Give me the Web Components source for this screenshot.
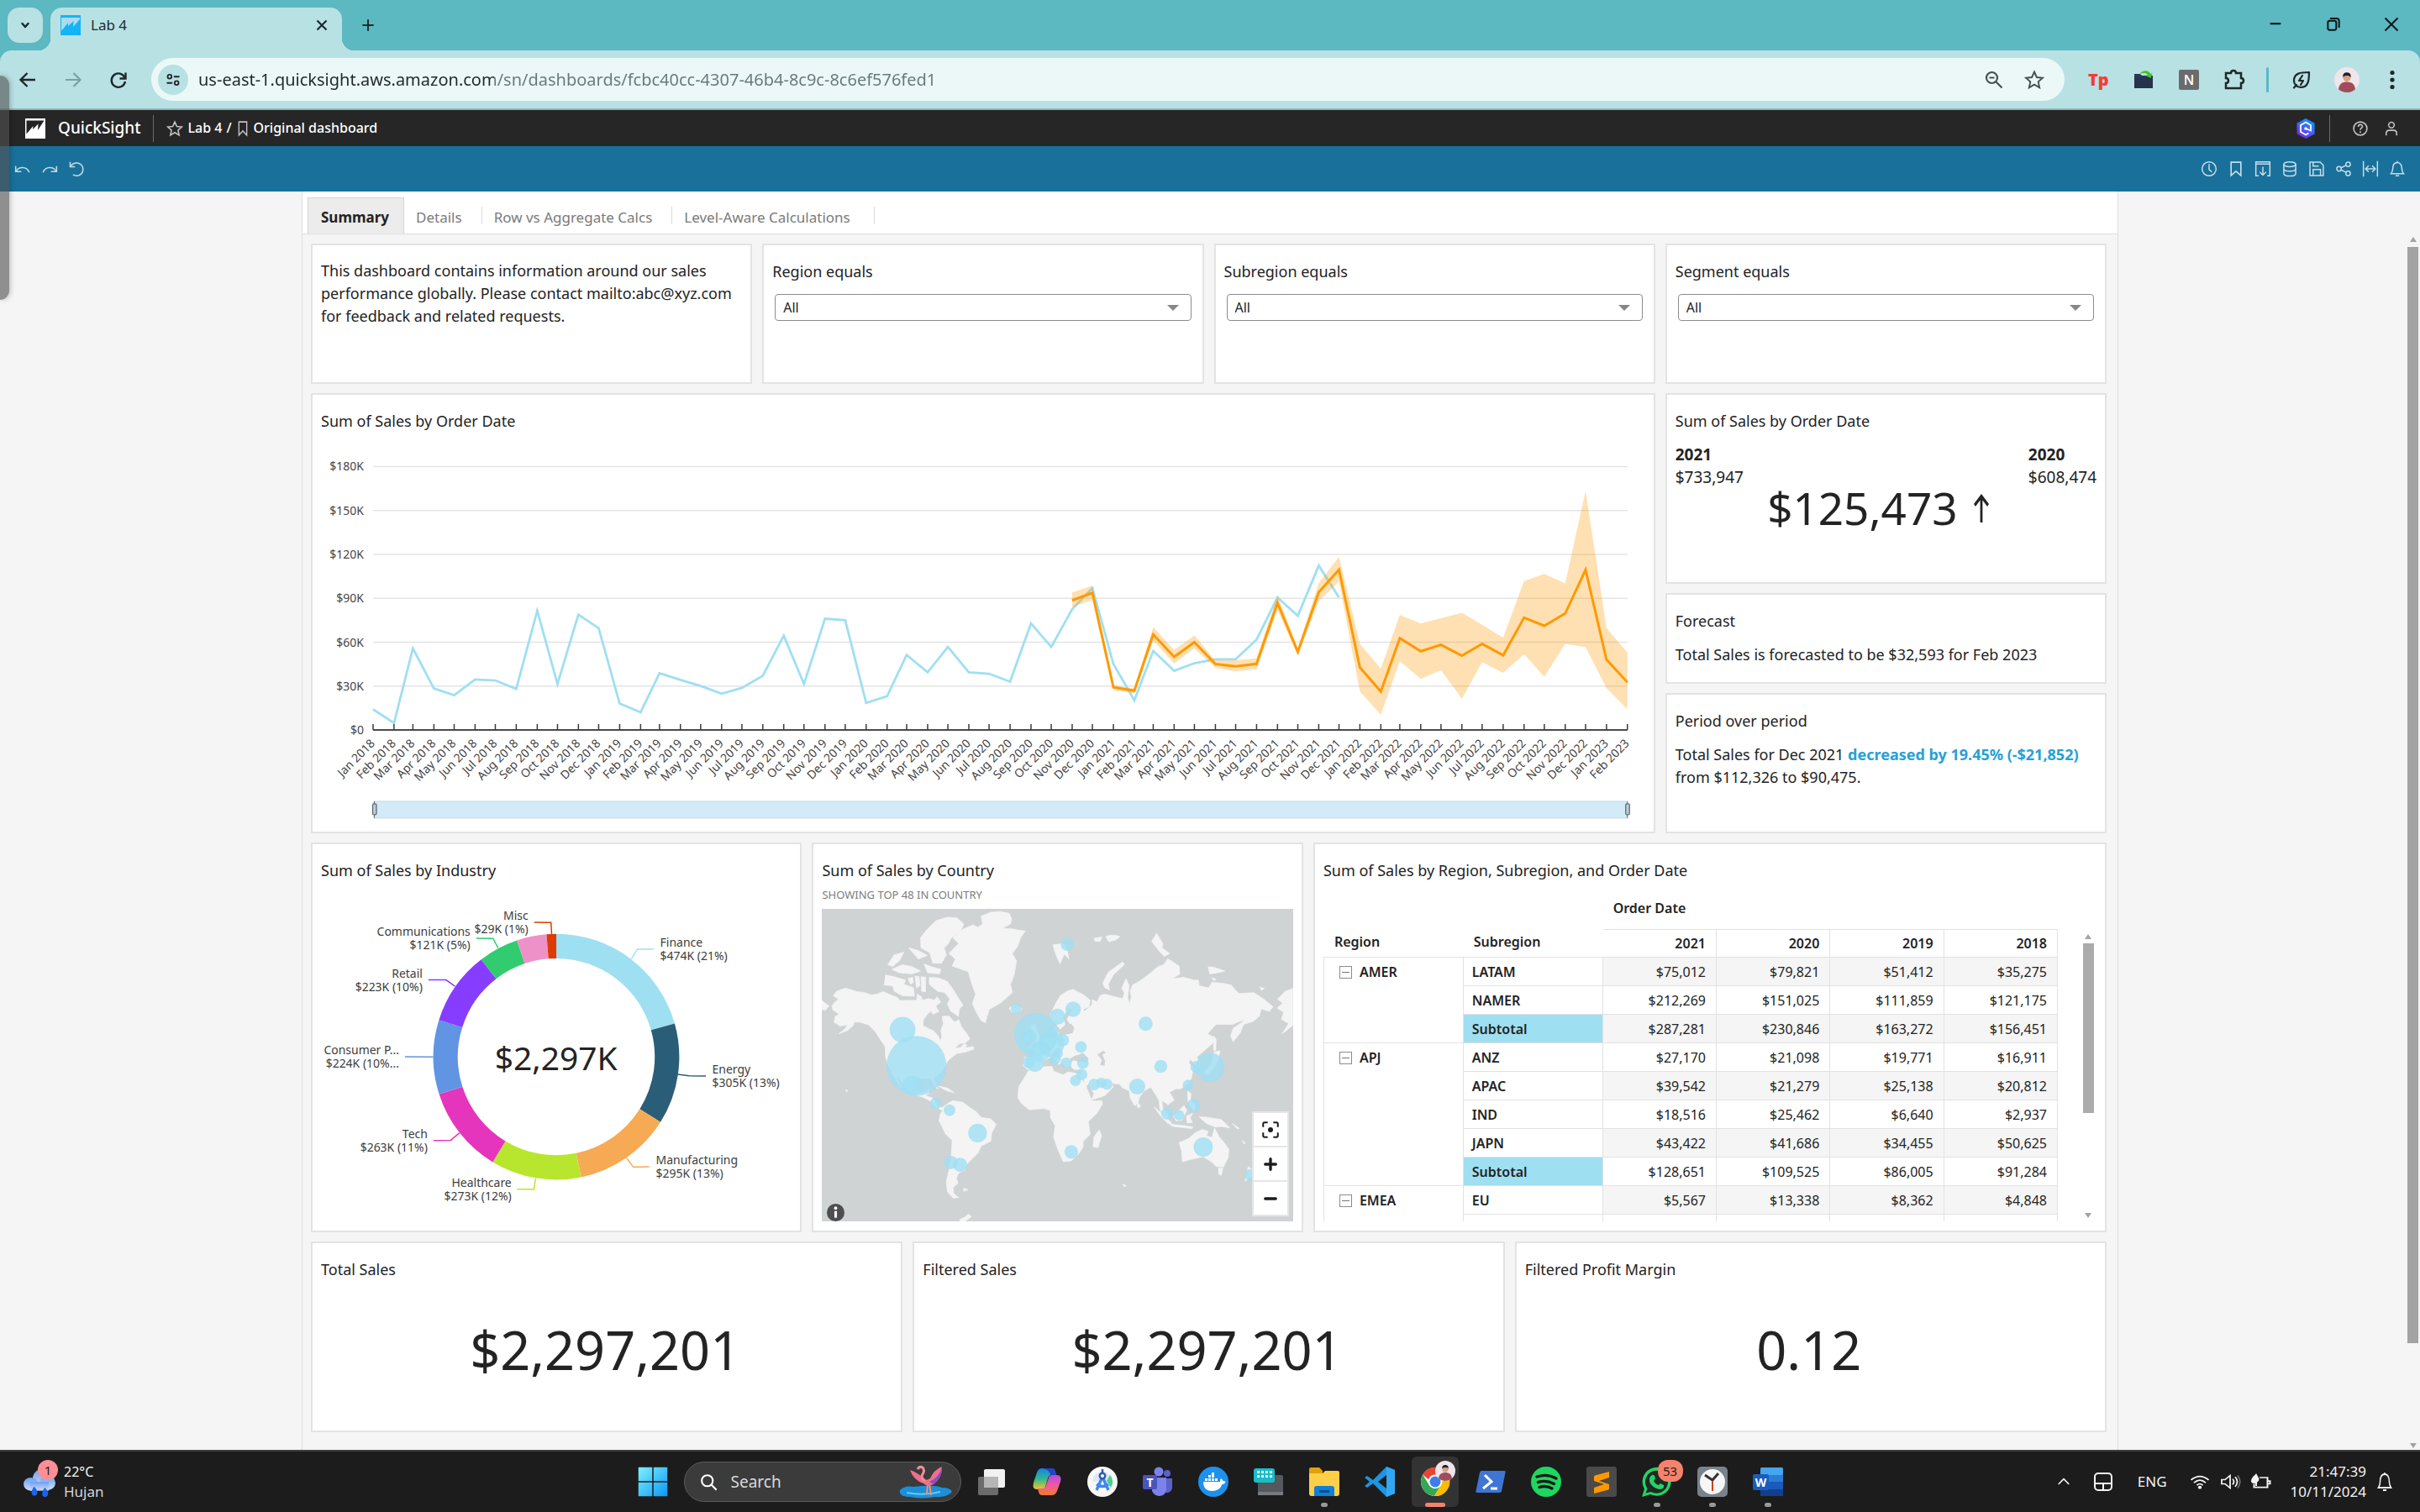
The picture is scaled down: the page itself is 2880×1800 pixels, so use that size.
<!DOCTYPE html>
<html lang="en">
<head>
<meta charset="utf-8">
<title>Lab 4</title>
<style>
html,body{margin:0;height:100%}
body{display:flex;flex-direction:column;background:#f5f5f5;color:#232323;font:18px/27px "Noto Sans","Open Sans",sans-serif;overflow:hidden}
p{margin:0}
sheet-view{flex:1;min-height:0}
</style>
</head>
<body>
<tab-strip></tab-strip>
<browser-toolbar></browser-toolbar>
<quick-header></quick-header>
<action-bar></action-bar>
<sheet-view>
  <dash-row kind="quarters">
    <visual-card><p>This dashboard contains information around our sales performance globally. Please contact mailto:abc@xyz.com for feedback and related requests.</p></visual-card>
    <visual-card><filter-control label="Region equals"></filter-control></visual-card>
    <visual-card><filter-control label="Subregion equals"></filter-control></visual-card>
    <visual-card><filter-control label="Segment equals"></filter-control></visual-card>
  </dash-row>
  <dash-row kind="trend">
    <visual-card heading="Sum of Sales by Order Date"><trend-chart></trend-chart></visual-card>
    <dash-row kind="stack">
      <visual-card heading="Sum of Sales by Order Date"><kpi-compare></kpi-compare></visual-card>
      <visual-card heading="Forecast"><text-insight>Total Sales is forecasted to be $32,593 for Feb 2023</text-insight></visual-card>
      <visual-card heading="Period over period"><text-insight>Total Sales for Dec 2021 <b>decreased by 19.45% (-$21,852)</b> from $112,326 to $90,475.</text-insight></visual-card>
    </dash-row>
  </dash-row>
  <dash-row kind="detail">
    <visual-card heading="Sum of Sales by Industry"><donut-chart></donut-chart></visual-card>
    <visual-card heading="Sum of Sales by Country"><bubble-map></bubble-map></visual-card>
    <visual-card heading="Sum of Sales by Region, Subregion, and Order Date"><pivot-table></pivot-table></visual-card>
  </dash-row>
  <dash-row kind="thirds">
    <visual-card heading="Total Sales"><kpi-value>$2,297,201</kpi-value></visual-card>
    <visual-card heading="Filtered Sales"><kpi-value>$2,297,201</kpi-value></visual-card>
    <visual-card heading="Filtered Profit Margin"><kpi-value>0.12</kpi-value></visual-card>
  </dash-row>
</sheet-view>
<win-taskbar></win-taskbar>

<script>
const BASE = `
*{box-sizing:border-box}
button{font:inherit;color:inherit;background:none;border:0;padding:0;margin:0;display:flex;align-items:center;justify-content:center}
a{color:inherit;text-decoration:none}
p,h1,h2,h3{margin:0;font:inherit}
svg{display:block}
`;
function define(name, css, html, setup) {
  customElements.define(name, class extends HTMLElement {
    constructor() { super(); this.attachShadow({ mode: 'open' }); }
    connectedCallback() {
      this.shadowRoot.innerHTML = `<style>${BASE}${css}</style>` + (typeof html === 'function' ? html(this) : html);
      if (setup) setup(this.shadowRoot, this);
    }
  });
}

/* ---------- icons ---------- */
const line = (d, w = 2) => `<g fill="none" stroke="currentColor" stroke-width="${w}" stroke-linecap="round" stroke-linejoin="round">${d}</g>`;
const flat = (d, w = 2) => `<g fill="none" stroke="currentColor" stroke-width="${w}">${d}</g>`;
const person = `<circle cx="12" cy="12" r="12" fill="#efe6ea"/><path d="M4 21c.5-5 3.5-7 8-7s7.500 2 8 7a12 12 0 0 1-16 0z" fill="#a14c5a"/><circle cx="12" cy="10" r="3.600" fill="#d9a184"/><path d="M8.200 9.500C8 6 10 5 12 5s4 1 3.800 4.500C14.500 7.600 10 7.600 8.200 9.500z" fill="#20222a"/>`;
const ICONS = {
  chevron: line('<path d="M8.500 10l3.500 4 3.500-4"/>', 2.5),
  up: line('<path d="M5 15l7-7 7 7"/>', 2),
  close: flat('<path d="M6.500 6.500l11 11M17.500 6.500l-11 11"/>', 2.2),
  plus: flat('<path d="M12 4v16M4 12h16"/>', 2.3),
  min: flat('<path d="M4.500 11h15"/>', 2.6),
  max: line('<rect x="4" y="7" width="12" height="13" rx="2.500"/><path d="M8 3.500h8.500q3.500 0 3.500 3.500v9"/>', 2.4),
  winclose: flat('<path d="M3 3l18 18M21 3L3 21"/>', 2.3),
  back: flat('<path d="M21 12H4M11.500 4L3.500 12l8 8"/>', 2.4),
  fwd: flat('<path d="M3 12h17M12.500 4l8 8-8 8"/>', 2.2),
  reload: flat('<path d="M19.500 9.500A8.200 8.200 0 1 0 20 14"/><path d="M20.500 3.500v7h-7"/>', 2.4),
  tune: flat('<circle cx="7" cy="7.500" r="2.800"/><path d="M13 7.500h8M3 16.500h8"/><circle cx="17" cy="16.500" r="2.800"/>', 2.2),
  zoomout: flat('<circle cx="9.500" cy="9.500" r="6.500"/><path d="M14.500 14.500l7 7M6.500 9.500h6"/>', 2.2),
  star: flat('<path d="M12 2.500l2.900 6.500 7.100.7-5.300 4.700 1.500 7L12 17.700 5.800 21.400l1.500-7L2 9.700 9.100 9z"/>', 1.9),
  tp: '<text x="0" y="19" font-family="Open Sans,sans-serif" font-weight="800" font-size="20" fill="#f83a35">Tp</text>',
  folder: '<path d="M1 5h7l2 2h13v15H1z" fill="#2a3a55"/><path d="M1 9h22v13H1z" fill="#26334b"/><path d="M7 5.500C11-.5 18 0 20.500 5l2-1-2 6-6-3 2.500-1C15 3.500 11 3.500 7 5.500z" fill="#3fc71e"/>',
  n: '<rect width="24" height="24" rx="2" fill="#6b6b6b"/><text x="12" y="18" text-anchor="middle" font-family="Open Sans,sans-serif" font-weight="600" font-size="16" fill="#fff">N</text>',
  puzzle: flat('<path d="M2 4h6c0-4 6-4 6 0h6v6c4 0 4 6 0 6v6H2v-6c4 0 4-6 0-6z"/>', 2.5),
  leaf: line('<path d="M21 3c-10 0-18 1-18 10 0 4 3 8 8 8 9 0 10-8 10-18zM6 18l-3 3.500"/><path d="M13 7l-4 6h5l-3 5"/>', 2.2),
  avatar: person,
  dots: '<g fill="currentColor"><circle cx="12" cy="3.500" r="2.600"/><circle cx="12" cy="12" r="2.600"/><circle cx="12" cy="20.500" r="2.600"/></g>',
  favicon: '<defs><linearGradient id="g" x2="1" y2="1"><stop stop-color="#7fd7f7"/><stop offset="1" stop-color="#00aef2"/></linearGradient></defs><rect width="24" height="24" fill="#14b4f5"/><path d="M1 3h22v2l-8 9 .5-7L9 13V9L1 19z" fill="#a9dcf0"/>',
  qs: '<path d="M1 0h23v24H0V0z" fill="#fff"/><path d="M1.500 2.500h21L15 14l.5-7.500L9 13l.5-4-8 9.500z" fill="#222"/>',
  book: flat('<path d="M5 2.500h14v19l-7-6-7 6z"/>', 2),
  q: '<defs><linearGradient id="g" x1=".8" y1="0" x2=".2" y2="1"><stop stop-color="#00a0ff"/><stop offset=".55" stop-color="#4a5cff"/><stop offset="1" stop-color="#7a1fd6"/></linearGradient></defs><path d="M12 0l10.500 5.500v13L12 24 1.500 18.500v-13z" fill="url(#g)"/><path d="M15.500 17.500L12 19.500l-6-3.500V8l6-3.500L18 8v6.500l-6-2.500" fill="none" stroke="#fff" stroke-width="1.800"/><circle cx="12" cy="12" r="1.800" fill="#fff"/>',
  help: flat('<circle cx="12" cy="12" r="9.500"/><path d="M9 9.500c0-4 6-4 6-.5 0 2.500-3 2.300-3 5M12 16v2.200"/>', 1.9),
  user: flat('<circle cx="12" cy="7" r="4"/><path d="M4.500 22v-3q0-4.500 4.500-4.500h6q4.500 0 4.500 4.500v3"/>', 1.9),
  undo: flat('<path d="M2 8v8h8"/><path d="M2.500 15.500C6 9 17 7 21.500 17"/>', 1.8),
  redo: flat('<path d="M22 8v8h-8"/><path d="M21.500 15.500C18 9 7 7 2.500 17"/>', 1.8),
  reset: flat('<path d="M3 2v7h7"/><path d="M3.500 8.500C7 3 14 1.800 18.500 6c5 5 3 13-3 15.300-3 1-6 .5-8.500-1"/>', 1.8),
  clock: flat('<circle cx="12" cy="12" r="10"/><path d="M12 5v8l4 3.500"/>', 1.8),
  export: flat('<path d="M6 22H2V2h20v20h-4M2 5h20M12 9v12M7.500 16.500L12 21l4.500-4.500"/>', 1.8),
  db: flat('<ellipse cx="12" cy="5.500" rx="8.500" ry="3.500"/><path d="M3.500 5.500v13c0 5 17 5 17 0v-13M3.500 12c0 4.500 17 4.500 17 0"/>', 1.8),
  save: flat('<path d="M2.500 2.500H17l4.500 4.500v14.500h-19zM7 21v-8h10.500v8M7 2.500V8h8"/>', 1.8),
  share: flat('<circle cx="5.500" cy="12" r="3.200"/><circle cx="18.500" cy="5.500" r="3.200"/><circle cx="18.500" cy="18.500" r="3.200"/><path d="M8.500 10.500l7-3.500M8.500 13.500l7 3.500"/>', 1.8),
  fit: flat('<path d="M2 1v22M22 1v22M5 12h14M9.500 7.500L5 12l4.500 4.500M14.500 7.500L19 12l-4.500 4.500"/>', 1.8),
  bell: flat('<path d="M3 19h18q-2.500-3-2.500-7c0-5-2-9-6.500-9s-6.500 4-6.500 9q0 4-2.500 7zM12 3V1M9.500 22h5"/>', 1.8),
  arrow: flat('<path d="M12 1.500V24M4 9.500L12 2l8 7.500"/>', 2.8),
  centre: flat('<path d="M1.500 8V3.500q0-2 2-2H8M16 1.500h4.500q2 0 2 2V8M22.500 16v4.500q0 2-2 2H16M8 22.500H3.500q-2 0-2-2V16"/>', 2.4) + '<circle cx="12" cy="12" r="3.600" fill="currentColor"/>',
  mplus: line('<path d="M12 4.500v15M4.500 12h15"/>', 4),
  mminus: line('<path d="M4.500 12h15"/>', 4),
  info: '<circle cx="12" cy="12" r="12" fill="#4c4e50"/><circle cx="12" cy="6" r="2.200" fill="#fff"/><path d="M10.200 10h3.600v9h-3.600z" fill="#fff"/>',
  weather: '<defs><linearGradient id="g" x2="0" y2="1"><stop stop-color="#6da0ee"/><stop offset="1" stop-color="#c9dcfb"/></linearGradient></defs><g fill="url(#g)"><circle cx="15" cy="9" r="8"/><circle cx="5.500" cy="14" r="5.500"/><circle cx="18" cy="13" r="6"/><rect x="5" y="12" width="14" height="7.500"/></g><path d="M8 16q5 6 0 8-4-2 0-8zM16 17q5 6 0 8-4-2 0-8z" fill="#1d62f0"/>',
  windows: '<defs><linearGradient id="g" x2="1" y2="1"><stop stop-color="#7ff0ff"/><stop offset="1" stop-color="#0a98f5"/></linearGradient></defs><path d="M.5.500h11v11H.5zM12.500.500h11v11h-11zM.5 12.500h11v11H.5zM12.500 12.500h11v11h-11z" fill="url(#g)"/>',
  magnify: flat('<circle cx="10" cy="10" r="7.500"/><path d="M15.500 15.500l7 7"/>', 2.4),
  pad: flat('<rect x="2" y="2" width="20" height="20" rx="4"/><path d="M2 14h20M12 14v8"/>', 2),
  wifi: flat('<path d="M1.500 9.500Q12-1 22.500 9.500M5 13.500q7-7.500 14 0M8.500 17q3.500-4 7 0"/>', 2) + '<circle cx="12" cy="20" r="2.200" fill="currentColor"/>',
  volume: flat('<path d="M2 9h4l6-6v18l-6-6H2zM15 8q3 4 0 8M18 5q5 7 0 14"/>', 1.8) + '<path d="M21 3q5.500 9 0 18" fill="none" stroke="#6d6d6d" stroke-width="1.800"/>',
  battery: flat('<path d="M11 6h9.500v14H4.500v-5M21 11h2.500v4H21"/>', 2) + '<path d="M1 12C1 5 5 4 7 0c2 5 6 9 1 13v5H6v-4q-4 1-5-2z" fill="currentColor"/>'
};
define('ui-icon', ':host{display:block;width:24px;height:24px;flex:none}svg{width:100%;height:100%;overflow:visible}',
  el => `<svg viewBox="0 0 24 24" preserveAspectRatio="none" aria-hidden="true">${ICONS[el.getAttribute('name')]}</svg>`);

const APPS = {
  taskview: '<rect x="2" y="12" width="24" height="22" rx="2" fill="#6b6b6b"/><rect x="9" y="3" width="25" height="22" rx="2" fill="#f1f1f1"/><path d="M9 12h17v13H11q-2 0-2-2z" fill="#b6b6b6"/>',
  copilot: '<defs><linearGradient id="a" x2="0" y2="1"><stop stop-color="#1a7fe8"/><stop offset=".5" stop-color="#2fb98e"/><stop offset="1" stop-color="#f6c22b"/></linearGradient><linearGradient id="b" x2="0" y2="1"><stop stop-color="#b14be0"/><stop offset=".5" stop-color="#ee5aa0"/><stop offset="1" stop-color="#f5792a"/></linearGradient></defs><path d="M12 2h12q3 0 4 4l1 4h-6q-3 0-4 4l-3 10q-1 3-4 3H6q-6 0-4-8L6 7q2-5 6-5z" fill="url(#a)"/><path d="M24 34H12q-3 0-4-4l-1-4h6q3 0 4-4l3-9q1-3 4-3h6q6 0 4 8l-4 11q-2 5-6 5z" fill="url(#b)"/><path d="M12 2h12q3 0 4 4l1 4h-7q-1-7-10-8z" fill="#2344c4"/>',
  android: '<circle cx="18" cy="18" r="18" fill="#f8f8f8"/><path d="M6 18a12 12 0 0 1 24 0c0 4-2 8-5 10L18 17z" fill="#dfe8fb"/><path d="M27 10a12 12 0 0 1 1 15l-5-8z" fill="#4ad08d"/><path d="M18 12L11 28M18 12l7 16M11 21q7 5 14 0" fill="none" stroke="#4285f4" stroke-width="3.400"/><circle cx="18" cy="11" r="4.500" fill="#2f5fa8"/><circle cx="18" cy="11" r="2" fill="#f8f8f8"/><path d="M18 3v5" stroke="#2f5fa8" stroke-width="2.500"/>',
  teams: '<circle cx="29" cy="8" r="4" fill="#5a62c9"/><circle cx="19" cy="6" r="5.500" fill="#7b83eb"/><path d="M23 14h12v12q-2 6-8 5z" fill="#5a62c9"/><path d="M11 13h17v14q-1 8-9 8-6-1-8-6z" fill="#7b83eb"/><rect x="0" y="10" width="17" height="17" rx="2" fill="#4b53bc"/><text x="8.500" y="24" text-anchor="middle" font-size="14" font-weight="700" fill="#fff">T</text>',
  docker: '<circle cx="18" cy="18" r="18" fill="#1d91ee"/><path d="M6 18h20q0-3 1-4 2 1 2.500 3 2 0 3 1-1 3-4 3-3 8-12 8Q6 29 6 18z" fill="#fff"/><path d="M8 14h3v3H8zM12 14h3v3h-3zM16 14h3v3h-3zM20 14h3v3h-3zM12 10h3v3h-3zM16 10h3v3h-3zM16 7h3v3h-3z" fill="#fff"/>',
  keyboard: '<rect x="5" y="10" width="30" height="24" rx="2" fill="#55585d"/><rect x="5" y="30" width="30" height="4" fill="#777b80"/><rect x="0" y="2" width="25" height="17" rx="3" fill="#18bdc9"/><path d="M4 5h3v3H4zM9 5h3v3H9zM14 5h3v3h-3zM19 5h3v3h-3zM4 10h3v3H4zM9 10h3v3H9zM14 10h3v3h-3zM19 10h3v3h-3z" fill="#eafcff"/>',
  explorer: '<path d="M0 3q0-2 2-2h10l4 4v6H0z" fill="#e3a008"/><path d="M0 8h16l3-3h15q2 0 2 2v25q0 3-3 3H3q-3 0-3-3z" fill="#ffcf48"/><path d="M6 35V26q0-3 3-3h18q3 0 3 3v9z" fill="#0f7fd7"/><path d="M12 28h12v3H12z" fill="#0a4f94"/>',
  vscode: '<path d="M26 0l10 4v28l-10 4L10 20l-7 5-3-2 6-5-6-5 3-2 7 5zM26 10l-10 8 10 8z" fill="#1f94e0"/><path d="M26 0l10 4v28l-10 4z" fill="#33a8f2"/>',
  chrome: '<circle cx="18" cy="18" r="17" fill="#fff"/><path d="M3.300 9.500A17 17 0 0 1 33 9.500H18a8.500 8.500 0 0 0-8 6z" fill="#ea4335"/><path d="M3.300 9.500A17 17 0 0 0 17 35l7.500-12.500a8.500 8.500 0 0 1-14-1z" fill="#34a853"/><path d="M33 9.500A17 17 0 0 1 17 35l8-13a8.500 8.500 0 0 0-1-10.500L18 9.500z" fill="#fbbc04"/><circle cx="18" cy="18" r="8" fill="#fff"/><circle cx="18" cy="18" r="6.500" fill="#3b7ded"/>',
  powershell: '<path d="M7 5h27q2 0 1.500 2L31 29q-.5 2-2.500 2H2q-2 0-1.500-2L5 7q.5-2 2-2z" fill="#3f76d6"/><path d="M11 10l8 8-10 8M18 26h8" fill="none" stroke="#fff" stroke-width="3"/>',
  spotify: '<circle cx="18" cy="18" r="18" fill="#1ed760"/><path d="M7 12q12-4 23 2M8.500 18.500q10-3 19 2M10 24.500q8-2.500 15 1.500" fill="none" stroke="#16181a" stroke-width="3.400" stroke-linecap="round"/>',
  sublime: '<rect width="36" height="36" rx="3" fill="#4a4a4a"/><path d="M27 6v7l-12 4 12 4v5q0 1-1 1.500L9 32v-7l12-4-12-4v-5q0-1 1-1.500z" fill="#ff9800"/>',
  whatsapp: '<path d="M0 36l3-9.500A17 17 0 1 1 10 33z" fill="#25d366"/><path d="M4.500 31.500l2-5.500A13.500 13.500 0 1 1 11 30z" fill="#1f2a24"/><path d="M12 10q2-1 3 1l1 3-2 3q2 4 6 5l2-2 4 2q1 4-4 5-7 0-12-7-3-7 2-10z" fill="#25d366"/>',
  clockapp: '<rect width="36" height="36" rx="5" fill="#79838c"/><circle cx="18" cy="18" r="15" fill="#f6f6f6"/><path d="M9 10l9 6 7-8" fill="none" stroke="#333" stroke-width="3"/><path d="M18 17v12" stroke="#d33d1c" stroke-width="2"/>',
  word: '<rect x="9" y="1" width="27" height="34" rx="2" fill="#2b7cd3"/><rect x="9" y="1" width="27" height="9" rx="2" fill="#43a6ee"/><rect x="9" y="26" width="27" height="9" rx="2" fill="#123f8c"/><rect x="9" y="18" width="27" height="9" fill="#185abd"/><rect x="0" y="9" width="19" height="19" rx="2" fill="#1a5cbe"/><text x="9.500" y="24" text-anchor="middle" font-size="14" font-weight="700" fill="#fff">W</text>'
};
define('app-icon', ':host{display:block;width:36px;height:36px}svg{width:100%;height:100%;overflow:visible}',
  el => `<svg viewBox="0 0 36 36" aria-hidden="true">${APPS[el.getAttribute('name')]}</svg>`);

/* ---------- browser chrome ---------- */
define('tab-strip', `
:host{display:flex;height:60px;background:#5cb8c1;color:#1b2b2d;align-items:flex-end;padding-left:9px;font-size:17px;line-height:24px}
.list{width:42px;height:42px;border-radius:14px;background:#b8e1e4;align-self:center}
.tab{position:relative;display:flex;align-items:center;width:347px;height:51px;margin-left:9px;padding:0 12px;background:#b8e1e4;border-radius:14px 14px 0 0;padding-bottom:9px}
.tab::before,.tab::after{content:"";position:absolute;bottom:0;width:14px;height:14px}
.tab::before{right:100%;background:radial-gradient(circle at 0 0,transparent 14px,#b8e1e4 14px)}
.tab::after{left:100%;background:radial-gradient(circle at 100% 0,transparent 14px,#b8e1e4 14px)}
.tab span{flex:1;margin-left:12px}
.add{width:62px;height:60px}
.win{display:flex;margin-left:auto;height:60px;color:#0b1517}
.win button{width:69px;height:58px}
.win ui-icon{width:20px;height:20px}`,
`<button class="list" aria-label="Search tabs"><ui-icon name="chevron"></ui-icon></button>
<div class="tab"><ui-icon name="favicon"></ui-icon><span>Lab 4</span><button aria-label="Close tab"><ui-icon name="close"></ui-icon></button></div>
<button class="add" aria-label="New tab"><ui-icon name="plus" style="width:20px;height:20px"></ui-icon></button>
<div class="win"><button aria-label="Minimize"><ui-icon name="min"></ui-icon></button><button aria-label="Restore"><ui-icon name="max"></ui-icon></button><button aria-label="Close"><ui-icon name="winclose"></ui-icon></button></div>`);

define('browser-toolbar', `
:host{display:block;background:#5cb8c1;border-bottom:2px solid #8fb6b9}
.bar{display:flex;align-items:center;height:69px;padding:0 6px;background:#b8e1e4;border-radius:14px 14px 0 0;color:#1f2729}
button{width:54px;height:54px}
.off{color:#7d9fa2}
.pill{flex:1;display:flex;align-items:center;height:51px;margin:0 13px 0 12px;padding:0 12px 0 8px;border-radius:26px;background:#ecf8f8;color:#454f51}
.site{width:36px;height:36px;border-radius:50%;background:#b8e1e4;color:#1f2729}
.site ui-icon{width:20px;height:20px}
input{flex:1;min-width:0;margin-left:12px;padding:0;border:0;outline:0;font:20px/28px "Noto Sans","Open Sans",sans-serif;color:#1f2729;background:linear-gradient(90deg,#1f2729 0 var(--host-w),#66787b var(--host-w)) text;-webkit-text-fill-color:transparent;--host-w:352px}
.pill .act{width:48px}
i{width:3px;height:30px;margin:0 12px 0 11px;border-radius:2px;background:#5cb8c1}
.face{width:30px;height:30px}`,
`<div class="bar"><button aria-label="Back"><ui-icon name="back"></ui-icon></button><button class="off" aria-label="Forward"><ui-icon name="fwd"></ui-icon></button><button aria-label="Reload"><ui-icon name="reload"></ui-icon></button>
<div class="pill"><button class="site" aria-label="Site information"><ui-icon name="tune"></ui-icon></button><input aria-label="Address" value="us-east-1.quicksight.aws.amazon.com/sn/dashboards/fcbc40cc-4307-46b4-8c9c-8c6ef576fed1"><button class="act" aria-label="Zoom"><ui-icon name="zoomout"></ui-icon></button><button class="act" aria-label="Bookmark"><ui-icon name="star"></ui-icon></button></div>
<button aria-label="Extension one"><ui-icon name="tp"></ui-icon></button><button aria-label="Extension two"><ui-icon name="folder"></ui-icon></button><button aria-label="Extension three"><ui-icon name="n"></ui-icon></button><button aria-label="Extensions"><ui-icon name="puzzle"></ui-icon></button><i></i><button aria-label="Energy saver"><ui-icon name="leaf"></ui-icon></button><button aria-label="Profile"><ui-icon class="face" name="avatar"></ui-icon></button><button aria-label="Menu"><ui-icon name="dots"></ui-icon></button></div>`);

/* ---------- application bars ---------- */
define('quick-header', `
:host{display:flex;align-items:center;height:43px;padding:0 24px 0 30px;background:#262626;color:#fff;font-size:16px;font-weight:500}
.name{font-size:19px;margin:0 15px}
i{width:1px;height:32px;background:#6b6b6b}
nav{display:flex;align-items:center;gap:5px;margin-left:15px}
nav ui-icon,.r ui-icon{width:20px;height:20px;color:#c4c4c4}
.r{display:flex;align-items:center;margin-left:auto}
.r .q{width:24px;height:24px;margin-right:16px}
.r button{margin-left:17px}.r i+button{margin-left:26px}`,
`<ui-icon name="qs"></ui-icon><a class="name" href="#home">QuickSight</a><i></i>
<nav><button aria-label="Favorite"><ui-icon name="star"></ui-icon></button><a href="#lab">Lab 4</a><span>/</span><ui-icon name="book" style="width:16px"></ui-icon><a href="#original">Original dashboard</a></nav>
<div class="r"><ui-icon class="q" name="q"></ui-icon><i></i><button aria-label="Help"><ui-icon name="help"></ui-icon></button><button aria-label="Account"><ui-icon name="user"></ui-icon></button></div>`);

define('action-bar', `
:host{display:flex;align-items:center;height:54px;padding:0 17px;gap:12px;background:#19719b;color:#c6dde8}
ui-icon{width:20px;height:20px}
.r{display:flex;gap:12px;margin-left:auto}`,
() => {
  const b = (n, l) => `<button aria-label="${l}"><ui-icon name="${n}"></ui-icon></button>`;
  return b('undo', 'Undo') + b('redo', 'Redo') + b('reset', 'Reset') + `<div class="r">${b('clock', 'Schedule') + b('book', 'Bookmarks') + b('export', 'Export') + b('db', 'Data') + b('save', 'Save') + b('share', 'Share') + b('fit', 'Fit width') + b('bell', 'Alerts')}</div>`;
});

/* ---------- sheet ---------- */
define('sheet-view', `
:host{display:block;position:relative}
.page{width:calc(100% - 40px);max-width:2162px;min-height:100%;margin:0 auto;border:solid #dedede;border-width:0 1px;display:flex;flex-direction:column}
nav{display:flex;align-items:flex-end;height:51px;padding-left:6px;background:#fff;border-bottom:1px solid #dedede;color:#7a7a7a;font-size:17px}
nav button{height:43px;padding:3px 14px 0;border:0 solid #d5d5d5}
nav .on{color:#232323;font-weight:700;background:#ececec;border-width:1px 1px 0;padding-left:15px;padding-right:17px}
nav i{width:1px;height:21px;margin:0 0 11px 9px;background:#d9d9d9}
nav i:last-child{margin-left:14px}
.body{display:flex;flex-direction:column;gap:11px;padding:11px 13px 11px 10px}
.bar{position:absolute;right:2px;top:54px;bottom:2px;width:13px;display:flex;flex-direction:column;align-items:center;gap:6px}
.bar b{flex:1;display:flex;width:13px}.bar b::before{content:"";width:100%;height:92%;background:#a3a3a3}
.bar s{border:4px solid transparent;border-top:0;border-bottom:6px solid #a3a3a3}
.bar s:last-child{transform:scaleY(-1)}
.edge{position:absolute;left:0;top:-138px;width:11px;height:267px;border-radius:0 12px 12px 0;background:rgba(80,80,80,.62);box-shadow:1px 0 6px rgba(0,0,0,.25)}`,
`<div class="page"><nav><button class="on">Summary</button><button>Details</button><i></i><button>Row vs Aggregate Calcs</button><i></i><button>Level-Aware Calculations</button><i></i></nav><div class="body"><slot></slot></div></div>
<div class="bar"><s></s><b></b><s></s></div><div class="edge"></div>`);

define('dash-row', `
:host{display:grid;gap:11px 12px}
:host([kind=quarters]){grid-template-columns:repeat(4,1fr);grid-auto-rows:minmax(167px,auto)}
:host([kind=trend]){grid-template-columns:repeat(4,1fr);grid-auto-rows:minmax(524px,auto)}
:host([kind=trend]) ::slotted(visual-card){grid-column:span 3}
:host([kind=stack]){grid-template-rows:227fr 108fr 167fr}
:host([kind=detail]){grid-template-columns:585fr 585fr 945fr;grid-auto-rows:minmax(464px,auto)}
:host([kind=thirds]){grid-template-columns:repeat(3,1fr);grid-auto-rows:minmax(227px,auto)}`, '<slot></slot>');

define('visual-card', `
:host{display:flex;flex-direction:column;min-width:0;min-height:0;padding:17px 10px 10px;background:#fff;border:2px solid #e3e3e3}
h2{font-size:18px;line-height:28px}`,
el => (el.getAttribute('heading') ? `<h2>${el.getAttribute('heading')}</h2>` : '') + '<slot></slot>');

define('filter-control', `
:host{display:block}
label{display:block;line-height:28px}
div{position:relative;margin:13px 3px 0}
select{display:block;width:100%;height:32px;padding:0 9px;border:1px solid #8c8c8c;border-radius:4px;background:#fff;appearance:none;font:16px/22px "Noto Sans","Open Sans",sans-serif;color:#232323}
div::after{content:"";position:absolute;right:15px;top:13px;border:7px solid transparent;border-top-color:#878787;border-bottom:0;pointer-events:none}`,
el => `<label for="f">${el.getAttribute('label')}</label><div><select id="f"><option>All</option></select></div>`);

define('text-insight', ':host{display:block;margin-top:13px}::slotted(b){color:#27a0d8}', '<slot></slot>');

define('kpi-value', ':host{flex:1;display:flex;align-items:center;justify-content:center;padding:0 4px 4px 0;font-size:63px;line-height:80px}', '<slot></slot>');

define('kpi-compare', `
:host{display:block;margin-top:13px}
.pair{display:flex;justify-content:space-between;font-size:19px}
b{display:block}
.big{display:flex;align-items:center;justify-content:center;gap:16px;padding-right:16px;font-size:53px;line-height:46px}
ui-icon{height:34px}`,
`<div class="pair"><div><b>2021</b>$733,947</div><div><b>2020</b>$608,474</div></div>
<div class="big">$125,473<ui-icon name="arrow"></ui-icon></div>`);

/* ---------- line chart ---------- */
define('trend-chart', `
:host{display:block}
svg{width:100%;height:auto;font:14px "Noto Sans","Open Sans",sans-serif;fill:#454545}`,
() => {
  const actual = [14,4.7,55.7,28.3,23.7,34.5,33.8,28,81.5,31.4,78.8,69.5,18,12,38.8,34.2,30,24.8,28.7,37,64.4,31.4,76,75,18.5,23,51.2,39.4,56.7,39.4,38.4,33,72.8,56.7,82.5,97,45,20.2,54,40.4,45.6,48.3,48.3,61.7,90.5,78,112.3,90.5];
  const mid = [88.5,93.6,29.1,26.8,65.2,49.9,60,45,43.5,45.2,86.8,53.4,94.1,109.5,42.7,26.2,62.7,53.8,58.2,50.7,58.8,51,76.7,71.2,79.6,109.5,48.1,32.6];
  const hi = [94,98.6,30.7,28.3,70.3,54.7,64.6,47.4,47.6,48.9,92,55.7,100.3,118.4,58.8,41.9,78.6,72.8,76.3,80,71.8,63.1,101.7,106.6,100.2,163.4,69.5,52.8];
  const lo = [83.9,88.9,27.2,25,61,45.4,55.7,42.3,40,41.5,81.9,50.9,87.9,101.3,26.2,10.5,47,34.9,40.8,21.4,46.4,39,51.8,36.3,58.8,56.7,28.5,14];
  const t = i => Date.UTC(2018, i, 1), x0 = 445, x1 = 1938;
  const x = i => +(x0 + (t(i) - t(0)) / (t(61) - t(0)) * (x1 - x0)).toFixed(1);
  const y = v => +(869 - v * 1.742).toFixed(1);
  const pts = (a, o) => a.map((v, i) => x(i + o) + ',' + y(v)).join(' ');
  const names = 'Jan Feb Mar Apr May Jun Jul Aug Sep Oct Nov Dec'.split(' ');
  let s = '';
  for (const v of [30, 60, 90, 120, 150, 180]) s += `<path d="M${x0} ${y(v)}H${x1}" stroke="#e4e4e4" stroke-width="1.500"/>`;
  for (const v of [0, 30, 60, 90, 120, 150, 180]) s += `<text x="434" y="${Math.round(y(v)) + 5}" text-anchor="end">$${v ? v + 'K' : 0}</text>`;
  s += `<polyline points="${pts(actual, 0)}" fill="none" stroke="#9fdff2" stroke-width="2.800"/>`;
  s += `<polygon points="${pts(hi, 34)} ${lo.map((v, i) => x(i + 34) + ',' + y(v)).reverse().join(' ')}" fill="#ff9900" opacity=".3"/>`;
  s += `<polyline points="${pts(mid, 34)}" fill="none" stroke="#ff9900" stroke-width="3"/>`;
  s += `<path d="M${x0} 869H${x1}" stroke="#4a4a4a" stroke-width="2"/>`;
  for (let i = 0; i < 62; i++) s += `<path d="M${x(i)} 862V869" stroke="#3a3a3a" stroke-width="1.500"/><text transform="translate(${(x(i) + 3).toFixed(1)} 886) rotate(-45)" text-anchor="end">${names[i % 12]} ${2018 + Math.floor(i / 12)}</text>`;
  s += `<rect x="446" y="954" width="1492" height="20" fill="#d3ebf6" stroke="#bfdde9"/>`;
  for (const h of [446.5, 1938]) s += `<path d="M${h} 954V974" stroke="#5f6b70"/><rect x="${h - 2}" y="957" width="4.500" height="13" rx="1.500" fill="#b9cfd8" stroke="#5f6b70" stroke-width="1.300"/>`;
  return `<svg viewBox="383 515 1576 464" role="img" aria-label="Sales by order date with forecast">${s}</svg>`;
});

/* ---------- donut ---------- */
define('donut-chart', `
:host{display:block}
svg{width:100%;height:auto;font:14px "Noto Sans","Open Sans",sans-serif;fill:#3d3d3d}
.total{font-size:39px;fill:#232323}`,
() => {
  const S = [
    [474, '#9fdff2', 'Finance', '$474K (21%)', 787, 1130, 0, '752.700,1141.700 760,1130 779.500,1130'],
    [305, '#2a5d78', 'Energy', '$305K (13%)', 849, 1281, 0, '808,1279.300 821.600,1281 841.500,1281.300'],
    [295, '#f6aa54', 'Manufacturing', '$295K (13%)', 782, 1389, 0, '747,1378.700 755,1389.700 774,1389.300'],
    [273, '#b8e62e', 'Healthcare', '$273K (12%)', 610, 1416, 1, '638.700,1403.300 636.700,1416 616.500,1416'],
    [263, '#e535bd', 'Tech', '$263K (11%)', 510, 1358, 1, '548,1349 537.600,1357.700 517,1358'],
    [224, '#6195e3', 'Consumer P...', '$224K (10%...', 476, 1258, 1, '516.600,1258.500 483,1258.300'],
    [223, '#863dff', 'Retail', '$223K (10%)', 504, 1167, 1, '542.600,1174.300 532,1166.700 511,1166.700'],
    [121, '#31cc70', 'Communications', '$121K (5%)', 561, 1117, 1, '594,1128.700 588,1117.300 568,1117'],
    [90, '#ee91c9'],
    [29, '#dd3b00', 'Misc', '$29K (1%)', 630, 1098, 1, '657.800,1112 657,1098.300 637,1098']
  ];
  const cx = 663.3, cy = 1258.3, R = 146.5, r = 117.3, sum = S.reduce((a, b) => a + b[0], 0);
  const p = (q, a) => `${(cx + q * Math.sin(a)).toFixed(2)} ${(cy - q * Math.cos(a)).toFixed(2)}`;
  let a = 0, s = '';
  for (const [v, c, n, l, x, y, end, pts] of S) {
    const b = a + v / sum * 2 * Math.PI;
    s += `<path fill="${c}" d="M${p(R, a)}A${R} ${R} 0 0 1 ${p(R, b)}L${p(r, b)}A${r} ${r} 0 0 0 ${p(r, a)}z"/>`;
    a = b;
    if (!n) continue;
    const k = end ? 'text-anchor="end"' : '';
    s += `<polyline points="${pts}" fill="none" stroke="${c}" stroke-width="1.500"/><text x="${x}" y="${y - 3}" ${k}>${n}</text><text x="${x}" y="${y + 13}" ${k}>${l}</text>`;
  }
  return `<svg viewBox="383 1050 561 404" role="img" aria-label="Sales by industry">${s}<text class="total" x="663" y="1274" text-anchor="middle">$2,297K</text></svg>`;
});

/* ---------- map ---------- */
define('bubble-map', `
:host{display:block}
h3{margin:5px 0 7px;font-size:13px;line-height:20px;color:#7c7c7c}
.map{position:relative}
.map>svg{width:100%;height:372px;background:#cfd3d4}
.ctl{position:absolute;right:5px;bottom:6px;width:44px;border:2px solid #e6e6e6;background:#fff;color:#1c1c1c}
.ctl button{width:100%;height:39px}
.ctl button+button{border-top:2px solid #e6e6e6;height:41px}
.ctl ui-icon{width:20px;height:20px}
.info{position:absolute;left:6px;bottom:0;}
.info ui-icon{width:21px;height:21px}`,
() => {
  const land = [
    '82,592 90,580 102,568 86,556 96,540 122,529 140,534 158,541 180,544 205,553 222,550 240,541 262,552 285,562 292,573 345,572 347,550 360,560 362,572 382,566 400,572 408,560 420,578 405,592 392,608 378,622 366,640 364,662 380,672 398,682 412,700 418,717 423,703 420,680 428,655 424,630 445,628 462,650 476,642 483,665 500,690 510,710 495,725 478,727 462,745 482,740 492,728 500,730 497,742 520,737 522,747 495,757 470,762 455,775 440,790 432,810 420,830 398,850 402,870 412,888 405,885 388,852 352,850 338,870 345,895 360,905 375,896 386,884 382,905 370,912 392,920 402,930 408,950 425,955 448,935 455,945 430,965 418,962 400,950 385,930 365,918 330,905 312,885 290,850 280,845 298,880 285,865 270,832 256,803 248,775 247,738 232,712 215,682 195,660 168,650 150,650 148,662 130,680 103,692 122,674 130,660 106,664 88,650 92,630 104,622 84,606',
    '428,962 455,930 488,936 510,955 530,970 545,990 575,995 592,1015 578,1045 575,1075 545,1092 535,1118 515,1140 500,1158 495,1178 476,1188 468,1205 473,1225 458,1240 460,1262 476,1276 458,1278 440,1255 437,1220 445,1180 452,1130 455,1072 435,1050 414,1002 418,978',
    '545,272 575,258 605,255 632,262 640,282 636,300 612,315 645,318 660,322 682,325 668,348 658,380 642,405 655,432 648,480 636,515 642,545 605,582 570,605 558,652 545,645 530,615 518,585 528,550 515,510 505,470 455,450 465,425 445,405 475,370 458,350 490,318 520,303 535,312 550,300',
    '375,322 405,288 440,276 470,278 491,300 480,330 452,350 442,372 430,385 437,410 422,440 395,440 385,402 358,385 357,348', '255,445 275,410 305,400 292,430 270,452', '268,462 300,445 330,452 357,468 330,478 290,474', '320,385 350,395 378,412 350,425', '368,442 390,452 420,462 416,478 378,474',
    '248,482 275,488 310,500 305,515 335,528 338,558 300,556 275,540 270,520 244,518', '318,495 332,490 335,508 326,515', '340,486 352,488 355,520 344,528', '358,488 373,490 372,542 360,540', '384,490 412,492 440,505 456,530 472,560 489,590 478,602 474,630 450,610 440,585 448,568 432,545 410,540 384,515', '385,600 402,590 414,612 395,622',
    '632,600 650,588 672,600 668,612 650,620 638,612', '700,662 712,655 718,680 730,715 722,728 700,732 708,705', '680,700 695,690 695,715 682,720',
    '770,600 778,580 792,555 812,540 830,533 862,552 884,572 880,595 862,604 866,612 890,588 890,570 905,578 915,555 930,550 955,558 985,566 990,545 982,530 995,495 1005,520 1000,560 1005,587 1012,560 1008,540 1015,518 1035,505 1060,485 1095,452 1112,445 1125,424 1140,435 1160,450 1162,478 1140,495 1175,490 1205,500 1220,500 1222,520 1252,528 1262,508 1300,512 1322,518 1345,548 1392,545 1425,570 1452,595 1440,612 1415,603 1410,628 1390,648 1360,658 1350,688 1328,720 1320,700 1328,672 1350,655 1365,640 1342,650 1328,658 1275,658 1248,692 1270,705 1265,725 1235,755 1215,775 1228,800 1220,820 1208,800 1195,782 1190,795 1205,812 1198,850 1185,872 1165,888 1150,888 1130,900 1145,928 1125,945 1118,938 1106,930 1110,960 1128,990 1115,990 1100,960 1098,930 1085,905 1072,882 1052,895 1038,915 1032,940 1022,948 1008,920 1005,895 985,885 975,872 950,868 955,882 930,912 890,927 880,900 862,865 868,862 858,850 858,822 832,818 820,800 832,788 870,795 880,782 862,762 838,768 820,780 822,800 810,815 798,790 785,765 782,775 802,795 785,800 770,770 755,778 735,792 738,805 715,822 690,820 675,805 680,775 705,775 715,760 695,740 715,735 740,710 760,700 765,680 775,670 790,700 830,690 835,670 825,655 845,650 820,655 812,640 828,605 815,600 800,630 805,660 790,675 775,650 765,650 758,625',
    '690,826 730,810 765,808 770,825 800,838 815,828 858,836 856,850 875,890 890,932 920,930 922,942 905,975 878,1005 884,1050 862,1075 862,1095 848,1120 825,1145 800,1148 785,1110 770,1060 775,1020 760,990 760,965 740,958 695,963 670,940 659,920 662,880 685,838',
    '895,1060 912,1035 919,1055 908,1098 893,1095', '1160,1080 1190,1065 1210,1045 1232,1033 1250,1040 1245,1055 1262,1062 1270,1028 1284,1058 1300,1080 1315,1105 1312,1135 1298,1167 1275,1165 1262,1150 1235,1130 1205,1138 1170,1148 1168,1112', '1282,1170 1296,1172 1291,1197 1283,1192',
    '1082,952 1115,985 1138,1012 1125,1012 1100,982', '1130,1014 1180,1020 1203,1024 1200,1030 1140,1022', '1143,985 1175,948 1184,965 1168,1000 1150,1002', '1183,985 1202,976 1194,992 1202,1008 1185,1010', '1222,988 1250,990 1292,998 1306,1014 1318,1028 1290,1022 1275,1025 1245,1012', '1325,1012 1348,1030 1340,1030', '1186,895 1197,905 1195,925 1212,950 1205,968 1188,935', '1238,832 1260,800 1268,758 1287,752 1280,790 1265,817 1245,840', '1268,700 1275,712 1274,752 1267,750', '1032,938 1040,948 1036,956 1030,952', '410,878 440,885 462,902 440,896',
    '768,374 800,370 812,392 818,425 803,408 790,442 778,412', '895,352 920,346 915,362 900,362', '932,345 945,340 962,340 976,345 965,356 942,364', '923,510 940,472 985,435 990,445 955,482 940,515 944,536 928,526', '1075,362 1090,333 1102,355 1110,372 1106,384 1130,405 1114,416 1095,392', '1250,452 1270,455 1302,468 1275,475 1255,478', '1262,492 1275,497 1268,502', '1412,525 1425,530 1415,537',
    '1513,530 1490,540 1466,568 1482,582 1465,600 1485,615 1478,640 1500,655 1480,692 1513,662', '50,573 72,592 62,607 50,605', '1375,1165 1390,1180 1385,1200 1365,1218', '490,1243 504,1248 492,1254', '478,1355 495,1345 505,1335 515,1344 495,1361 480,1361', '986,1228 996,1234 988,1236', '124,891 131,895 127,899', '1356,1072 1366,1083 1362,1085'
  ];
  const sea = ['906,765 925,752 932,760 922,765 930,790 928,806 915,803 920,785', '838,772 862,760 880,782 860,790 840,784', '878,870 895,905 888,925 872,880', '905,855 925,868 918,872'];
  const dots = [[344,806,93],[301,677,40],[332,876,30],[404,940,18],[447,964,18],[534,1046,29],[451,1151,21],[480,1159,22],[716,695,68],[694,703,23],[763,728,40],[728,755,32],[782,631,25],[831,604,24],[799,715,19],[693,793,19],[712,795,28],[774,782,18],[783,762,16],[763,690,18],[809,796,17],[855,739,18],[861,796,18],[857,837,18],[838,859,17],[896,873,18],[918,867,16],[936,872,17],[1030,880,25],[1056,656,22],[1103,808,20],[1214,810,19],[1256,811,45],[1188,875,17],[1205,948,21],[1123,976,19],[1160,982,16],[1235,1096,30],[825,1113,21],[1383,1196,19],[812,373,20],[654,603,17]];
  return `<h3>SHOWING TOP 48 IN COUNTRY</h3><div class="map"><svg viewBox="50 246 1463 1115" preserveAspectRatio="none" role="img" aria-label="World map of sales">
  <g fill="#f4f4f4" stroke="#f4f4f4" stroke-width="2" stroke-linejoin="round">${land.map(p => `<polygon points="${p}"/>`).join('')}</g>
  <g fill="#cfd3d4">${sea.map(p => `<polygon points="${p}"/>`).join('')}</g>
  <g fill="#9fdff2" fill-opacity=".8">${dots.map(d => `<ellipse cx="${d[0]}" cy="${d[1]}" rx="${d[2]}" ry="${(d[2] * 1.15).toFixed(1)}"/>`).join('')}</g></svg>
  <button class="info" aria-label="Map information"><ui-icon name="info"></ui-icon></button>
  <div class="ctl"><button aria-label="Reset view"><ui-icon name="centre" style="width:20px"></ui-icon></button><button aria-label="Zoom in"><ui-icon name="mplus"></ui-icon></button><button aria-label="Zoom out"><ui-icon name="mminus"></ui-icon></button></div></div>`;
});

/* ---------- pivot ---------- */
define('pivot-table', `
:host{display:flex;align-items:flex-start;height:400px;margin:4px 3px 0 0;overflow:hidden;font-size:16px;line-height:22px}
table{flex:1;min-width:0;width:100%;table-layout:fixed;border-collapse:collapse}
th,td{padding:0 12px;border:1px solid #e2e2e2;font-weight:600;text-align:left}
td{font-weight:400;text-align:right}
thead tr:first-child{height:52px}thead tr{height:33px}
tbody tr{height:34px}
thead .n{border-color:transparent}
thead .n.b{border-bottom-color:#e2e2e2}
thead tr+tr .n{padding-bottom:4px}
.y{text-align:right}
tbody th{padding:0 10px}
tbody th.g{padding:6px 10px 0 18px;vertical-align:top}
.g span{display:flex;align-items:center;gap:9px}
.g button{width:15px;height:15px;border:1px solid #8c8c8c}
.g button::before{content:"";width:9px;height:1px;background:#777}
tr.s td{background:#f5f5f5}
th.sub{background:#9fdff2}
.bar{width:13px;height:338px;margin:58px 0 4px 30px;display:flex;flex-direction:column;align-items:center;gap:5px}
.bar b{flex:1;width:13px;display:block}.bar b::before{content:"";display:block;width:13px;height:202px;background:#ababab}
.bar s{border:4px solid transparent;border-top:0;border-bottom:6px solid #a3a3a3}
.bar s:last-child{transform:scaleY(-1)}`,
() => {
  const data = [
    ['AMER', 3, 'LATAM', 75012, 79821, 51412, 35275], ['', 0, 'NAMER', 212269, 151025, 111859, 121175], ['', 0, 'Subtotal', 287281, 230846, 163272, 156451],
    ['APJ', 5, 'ANZ', 27170, 21098, 19771, 16911], ['', 0, 'APAC', 39542, 21279, 25138, 20812], ['', 0, 'IND', 18516, 25462, 6640, 2937], ['', 0, 'JAPN', 43422, 41686, 34455, 50625], ['', 0, 'Subtotal', 128651, 109525, 86005, 91284],
    ['EMEA', 2, 'EU', 5567, 13338, 8362, 4848], ['', 0, '', '', '', '', '']
  ];
  const rows = data.map(([g, n, sub, ...v], i) => `<tr class="${i % 2 ? '' : 's'}">${n ? `<th class="g" rowspan="${n}" scope="rowgroup"><span><button aria-label="Collapse ${g}"></button>${g}</span></th>` : ''}<th scope="row" class="${sub === 'Subtotal' ? 'sub' : ''}">${sub}</th>${v.map(x => `<td>${x === '' ? '' : '$' + x.toLocaleString('en-US')}</td>`).join('')}</tr>`).join('');
  return `<table><colgroup><col style="width:19%"><col style="width:19%"><col span="4"></colgroup><thead><tr><th class="n" colspan="2"></th><th class="n b" colspan="4">Order Date</th></tr><tr><th class="n b">Region</th><th class="n b">Subregion</th><th class="y">2021</th><th class="y">2020</th><th class="y">2019</th><th class="y">2018</th></tr></thead><tbody>${rows}</tbody></table><div class="bar"><s></s><b></b><s></s></div>`;
});

/* ---------- taskbar ---------- */
define('win-taskbar', `
:host{display:grid;grid-template-columns:1fr auto 1fr;align-items:center;height:72px;border-top:2px solid #3f3f3f;background:#1c1c1c;color:#f4f4f4;font-size:17px;line-height:24px}
.weather{display:flex;align-items:center;gap:10px;padding-left:28px;position:relative;font-size:16px}
.weather ui-icon{width:38px;height:34px}
.weather small{color:#d8d8d8;font-size:17px}
.weather div span,.weather small{display:block}
.badge{position:absolute;display:flex;align-items:center;justify-content:center;border-radius:12px;height:24px;min-width:24px;font-size:15px;color:#1c1c1c}
.mid{display:flex;align-items:center}
.app{position:relative;width:66px;height:60px}
.search{width:330px;height:48px;margin:0 3px 0 4px;padding:0 8px 0 18px;border-radius:24px;border:1px solid #5a5a5a;background:#3b3b3b;justify-content:flex-start;gap:16px;font-size:19px;color:#d9d9d9}
.search ui-icon{width:21px;height:21px;color:#fff}
.search svg{margin-left:auto}
.on::before{content:"";position:absolute;inset:0 5px;border-radius:6px;background:#333;z-index:-1}
.on{z-index:0}
.dot::after,.on::after{content:"";position:absolute;bottom:0;left:50%;width:8px;height:5px;margin-left:-4px;border-radius:3px;background:#9a9a9a}
.on::after{width:24px;margin-left:-12px;background:#f5836c}
.tray{display:flex;align-items:center;justify-content:flex-end;padding-right:32px}
.tray ui-icon{width:24px;height:20px}
.tray time{text-align:right;margin:0 12px 0 24px}`,
() => {
  const extra = {
    chrome: '<ui-icon name="avatar" style="position:absolute;right:9px;top:5px"></ui-icon>',
    whatsapp: '<span class="badge" style="right:2px;top:4px;min-width:30px;height:26px;background:#f5836c">53</span>'
  };
  const mark = { explorer: 'dot', chrome: 'on', whatsapp: 'dot', clockapp: 'dot', word: 'dot' };
  return `<div class="weather"><ui-icon name="weather"></ui-icon><div><span>22°C</span><small>Hujan</small></div><span class="badge" style="left:45px;top:-2px;background:#ff8f94">1</span></div>
<div class="mid"><button class="app" aria-label="Start"><ui-icon name="windows" style="width:36px;height:36px"></ui-icon></button>
<button class="search"><ui-icon name="magnify"></ui-icon>Search<svg width="66" height="40" viewBox="0 0 66 40" aria-hidden="true"><path d="M2 30q6-6 16-4 24-3 34 1 10 0 12 5-6 7-20 6-16 3-30 0-14 0-12-8z" fill="#1b8fd8"/><path d="M10 33q20 4 40-1" stroke="#6cc8f2" stroke-width="2" fill="none"/><path d="M34 35l1-13M39 36l-2-14" stroke="#f0916b" stroke-width="2"/><path d="M30 22Q18 18 14 6q12 4 17 12 4 0 7-2Q42 6 52 2q0 14-10 21-7 4-12-1z" fill="#f0708a"/><path d="M52 2q1 13-10 21l-5-3Q49 15 52 2z" fill="#8a4cc9"/><path d="M32 19q-6-4-3-8 3-4 0-8-4-2-6 2" fill="none" stroke="#f58aa0" stroke-width="3"/></svg></button>
${Object.keys(APPS).map(n => `<button class="app ${mark[n] || ''}" aria-label="${n}"><app-icon name="${n}"></app-icon>${extra[n] || ''}</button>`).join('')}</div>
<div class="tray"><button aria-label="Hidden icons"><ui-icon name="up" style="width:20px"></ui-icon></button><ui-icon name="pad" style="margin:0 29px 0 25px;height:24px"></ui-icon><span>ENG</span><ui-icon name="wifi" style="margin-left:27px"></ui-icon><ui-icon name="volume" style="margin:0 12px"></ui-icon><ui-icon name="battery"></ui-icon><time>21:47:39<br>10/11/2024</time><ui-icon name="bell" style="width:20px;height:24px"></ui-icon></div>`;
});
</script>
</body>
</html>
